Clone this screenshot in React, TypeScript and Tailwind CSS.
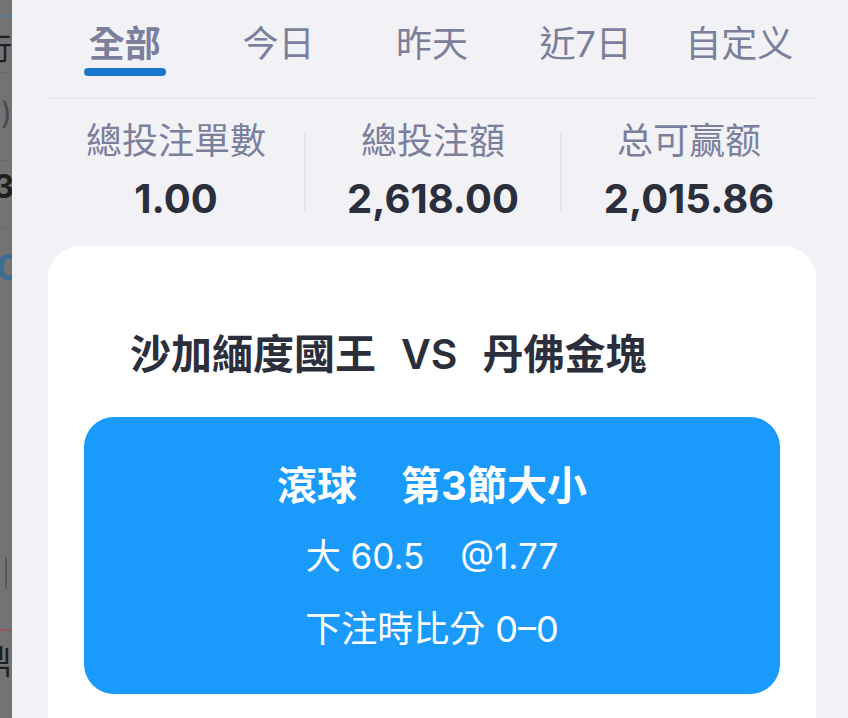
const tabs = ["全部", "今日", "昨天", "近7日", "自定义"];

const stats = [
  { label: "總投注單數", value: "1.00" },
  { label: "總投注額", value: "2,618.00" },
  { label: "总可赢额", value: "2,015.86" },
];

const font = { fontFamily: 'Inter, "Noto Sans CJK TC", sans-serif' };

function SideStrip() {
  // dimmed edge of the screen behind
  return (
    <div className="w-[12px] shrink-0 overflow-hidden bg-[#737373]">
      <div className="w-[40px] -ml-[28px] flex flex-col text-right text-[#1f1f1f]">
        <div className="h-[15px]" />
        <div className="h-[2px] bg-[#5f7f95]" />
        <div className="h-[55px] pt-[16px] text-[30px] leading-none">行</div>
        <div className="h-[1px] bg-[#6a6a6a]" />
        <div className="h-[87px] pt-[26px] text-[30px] leading-none text-[#4a4a4a]">0)</div>
        <div className="h-[1px] bg-[#6a6a6a]" />
        <div className="h-[67px] pt-[10px] text-[32px] font-bold leading-none">03</div>
        <div className="h-[1px] bg-[#6a6a6a]" />
        <div className="h-[328px] pt-[20px] text-[36px] font-bold leading-none text-[#3b6e93]">00</div>
        <div className="flex h-[72px] justify-end pr-[5px]">
          <div className="h-[32px] w-[2px] bg-[#5a5a5a]" />
        </div>
        <div className="h-[2px] bg-[#8c5a5a]" />
        <div className="pt-[14px] text-[34px] leading-none">鼎</div>
      </div>
    </div>
  );
}

export default function App() {
  return (
    <div className="flex h-[718px] w-[848px] overflow-hidden bg-[#f1f1f6]" style={font}>
      <SideStrip />
      <div className="flex-1 pl-[36px] pr-[32px]">
        <div className="flex h-[99px] border-b border-[#e2e2e9]">
          {tabs.map((t, i) => (
            <div key={t} className="flex flex-1 flex-col items-center pt-[26px]">
              <span
                className={
                  "text-[36px] leading-none text-[#7b7f9c] " + (i === 0 ? "font-bold" : "font-normal")
                }
              >
                {t}
              </span>
              {i === 0 && <div className="mt-[6px] h-[8px] w-[82px] rounded-full bg-[#1a77cf]" />}
            </div>
          ))}
        </div>

        <div className="flex pt-[24px]">
          {stats.map((s, i) => (
            <div key={s.label} className="flex flex-1 items-center">
              {i > 0 && <div className="h-[80px] w-[2px] bg-[#e4e4ea]" />}
              <div className="flex flex-1 flex-col items-center">
                <span className="text-[36px] leading-none text-[#7b7f9c]">{s.label}</span>
                <span className="mt-[20px] text-[40px] font-bold leading-none text-[#2b2e3b]">{s.value}</span>
              </div>
            </div>
          ))}
        </div>

        <div className="mt-[27px] h-[500px] rounded-t-[32px] bg-white px-[36px] pt-[88px]">
          <div className="flex pl-[46px] text-[41px] font-semibold leading-none text-[#2b2e3b]">
            <span>沙加緬度國王</span>
            <span className="mx-[25px]">VS</span>
            <span>丹佛金塊</span>
          </div>
          <div className="mt-[42px] flex flex-col items-center rounded-[30px] bg-[#1a9bfc] pb-[47px] pt-[49px] text-white">
            <div className="flex gap-[44px] text-[40px] font-bold leading-none">
              <span>滾球</span>
              <span>第3節大小</span>
            </div>
            <div className="mt-[33px] flex gap-[36px] text-[35px] leading-none">
              <span>大 60.5</span>
              <span>@1.77</span>
            </div>
            <div className="mt-[37px] text-[36px] leading-none">下注時比分 0–0</div>
          </div>
        </div>
      </div>
    </div>
  );
}
